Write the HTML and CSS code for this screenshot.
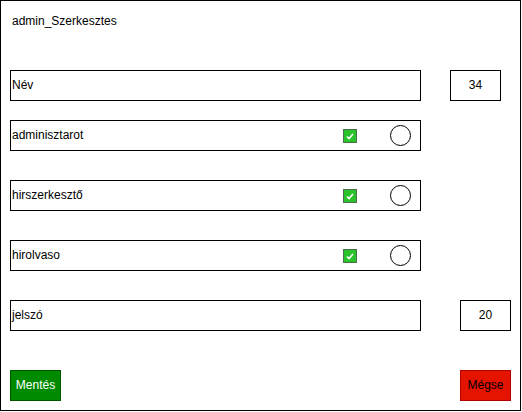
FILE: index.html
```html
<!DOCTYPE html>
<html>
<head>
<meta charset="utf-8">
<link rel="stylesheet" href="styles.css">
</head>
<body>
<div class="frame">
  <div class="title">admin_Szerkesztes</div>
  <div class="line first">
    <div class="field">Név</div>
    <div class="num gap29">34</div>
  </div>
  <div class="role">
    <span class="label">adminisztarot</span>
    <span class="check"><svg width="8" height="7" viewBox="0 0 8 7"><path d="M1 3.5 L3 5.5 L7 1" fill="none" stroke="#fff" stroke-width="1.6"/></svg></span>
    <span class="radio"></span>
  </div>
  <div class="role">
    <span class="label">hirszerkesztő</span>
    <span class="check"><svg width="8" height="7" viewBox="0 0 8 7"><path d="M1 3.5 L3 5.5 L7 1" fill="none" stroke="#fff" stroke-width="1.6"/></svg></span>
    <span class="radio"></span>
  </div>
  <div class="role">
    <span class="label">hirolvaso</span>
    <span class="check"><svg width="8" height="7" viewBox="0 0 8 7"><path d="M1 3.5 L3 5.5 L7 1" fill="none" stroke="#fff" stroke-width="1.6"/></svg></span>
    <span class="radio"></span>
  </div>
  <div class="line">
    <div class="field">jelszó</div>
    <div class="num gap39">20</div>
  </div>
  <div class="buttons">
    <div class="btn save">Mentés</div>
    <div class="btn cancel">Mégse</div>
  </div>
</div>
</body>
</html>
```
FILE: styles.css
```css
* { box-sizing: border-box; }
html, body { margin: 0; padding: 0; background: #fff; }
body { font-family: "Liberation Sans", Arial, sans-serif; font-size: 12px; color: #000; }
.frame {
  width: 521px;
  height: 411px;
  border: 1px solid #000;
  padding: 0 9px 0 9px;
  display: flex;
  flex-direction: column;
}
.title {
  height: 69px;
  padding: 12px 0 0 2px;
  line-height: 16px;
}
.line { display: flex; margin-top: 29px; }
.line.first { margin-top: 0; }
.field {
  width: 411px;
  height: 31px;
  border: 1px solid #000;
  padding-left: 1px;
  line-height: 29px;
}
.num {
  width: 51px;
  height: 31px;
  border: 1px solid #000;
  text-align: center;
  line-height: 29px;
}
.gap29 { margin-left: 29px; }
.gap39 { margin-left: 39px; }
.role {
  width: 411px;
  height: 31px;
  border: 1px solid #000;
  display: flex;
  align-items: center;
  padding: 0 9px 0 1px;
  margin-top: 19px;
}
.role + .role { margin-top: 29px; }
.label { flex: 1; line-height: 29px; }
.check {
  width: 14px;
  height: 14px;
  background: #2ac22a;
  border: 1px solid #4d6e4d;
  display: flex;
  align-items: center;
  justify-content: center;
  margin-top: 1px;
}
.check svg { display: block; }
.radio {
  width: 21px;
  height: 21px;
  border: 1px solid #000;
  border-radius: 50%;
  margin-left: 33px;
  background: #fff;
}
.buttons {
  display: flex;
  justify-content: space-between;
  margin-top: 39px;
}
.btn {
  width: 51px;
  height: 31px;
  line-height: 29px;
  text-align: center;
}
.save { background: #008a00; border: 1px solid #005700; color: #fff; }
.cancel { background: #e51400; border: 1px solid #b20000; color: #000; }
```
